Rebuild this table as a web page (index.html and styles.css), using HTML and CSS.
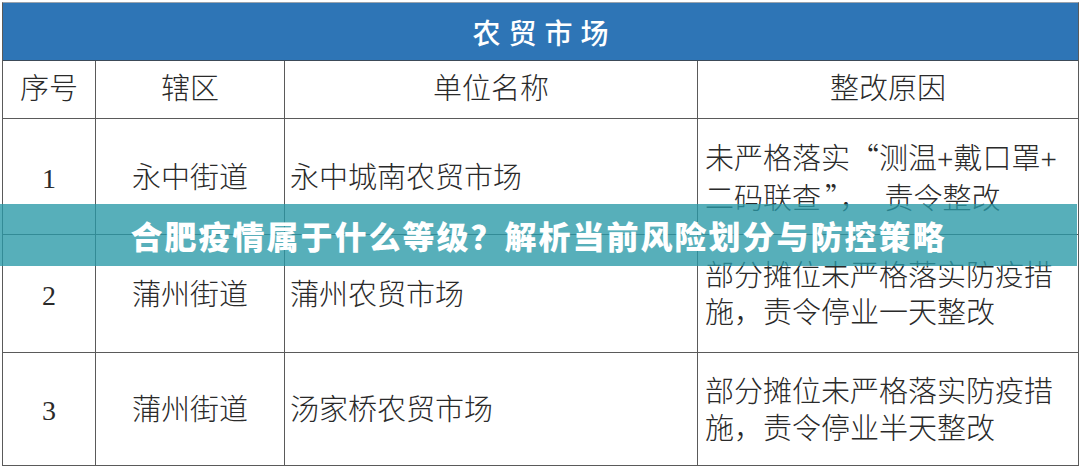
FILE: index.html
```html
<!DOCTYPE html>
<html lang="zh-CN">
<head>
<meta charset="utf-8">
<title>农贸市场</title>
<link rel="stylesheet" href="styles.css">
</head>
<body>
<div class="page">
  <div class="sheet">
    <div class="title">农贸市场</div>
    <div class="row head">
      <div class="cell c1">序号</div>
      <div class="cell c2">辖区</div>
      <div class="cell c3 center">单位名称</div>
      <div class="cell c4 center">整改原因</div>
    </div>
    <div class="row r1">
      <div class="cell c1 num">1</div>
      <div class="cell c2">永中街道</div>
      <div class="cell c3">永中城南农贸市场</div>
      <div class="cell c4"><span>未严格落实<span class="cjk">“</span>测温+戴口罩+<br>二码联查<span class="cjk q2">”</span>，<span class="gap"></span>责令整改</span></div>
    </div>
    <div class="row r2">
      <div class="cell c1 num">2</div>
      <div class="cell c2">蒲州街道</div>
      <div class="cell c3">蒲州农贸市场</div>
      <div class="cell c4"><span>部分摊位未严格落实防疫措<br>施，责令停业一天整改</span></div>
    </div>
    <div class="row r3">
      <div class="cell c1 num">3</div>
      <div class="cell c2">蒲州街道</div>
      <div class="cell c3">汤家桥农贸市场</div>
      <div class="cell c4"><span>部分摊位未严格落实防疫措<br>施，责令停业半天整改</span></div>
    </div>
  </div>
  <div class="banner">合肥疫情属于什么等级？解析当前风险划分与防控策略</div>
</div>
</body>
</html>
```

FILE: styles.css
```css
html, body {
  margin: 0;
  padding: 0;
  background: #ffffff;
}

.page {
  position: relative;
  width: 1080px;
  height: 470px;
  overflow: hidden;
  padding: 2px 0 0 2px;
  box-sizing: border-box;
}

.sheet {
  width: 1075px;
  border: 1px solid #5a5a5a;
  border-top-color: #9aa3ad;
  display: flex;
  flex-direction: column;
  font-family: "Liberation Serif", "Noto Sans CJK SC", serif;
  font-weight: 300;
  color: #2a2a2a;
  font-size: 29px;
}

.cjk {
  font-family: "Noto Sans CJK SC", sans-serif;
}

.q2 {
  padding-left: 4px;
}

.gap {
  display: inline-block;
  width: 16px;
}

.title {
  height: 57px;
  background: #2e75b6;
  color: #ffffff;
  display: flex;
  align-items: center;
  justify-content: center;
  font-family: "Noto Sans CJK SC", sans-serif;
  font-weight: 500;
  font-size: 28px;
  letter-spacing: 8px;
  padding-left: 8px;
  border-bottom: 1px solid #3c4a58;
}

.row {
  display: grid;
  grid-template-columns: 93px 189px 413px 1fr;
  border-bottom: 1px solid #5a5a5a;
}

.row.head { height: 57px; }
.row.r1 { height: 115px; }
.row.r2 { height: 117px; }
.row.r3 { height: 112px; border-bottom: none; }

.cell {
  display: flex;
  align-items: center;
  justify-content: center;
  border-right: 1px solid #5a5a5a;
  line-height: 37px;
  white-space: nowrap;
  padding-top: 3px;
  box-sizing: border-box;
}

.row.head .cell { padding-top: 0; }

.cell.c4 { border-right: none; }

.cell.c3 {
  justify-content: flex-start;
  padding-left: 5px;
}

.cell.c4 {
  justify-content: flex-start;
  padding-left: 7px;
}

.cell.center {
  justify-content: center;
  padding-left: 0;
}

.cell.num {
  font-family: "Liberation Serif", serif;
  font-weight: 400;
  font-size: 28px;
}

.banner {
  position: absolute;
  left: 0;
  top: 204px;
  width: 1077px;
  height: 62px;
  background: rgba(40, 152, 166, 0.78);
  color: #ffffff;
  display: flex;
  align-items: center;
  justify-content: center;
  font-family: "Noto Sans CJK SC", sans-serif;
  font-weight: 900;
  font-size: 32px;
  letter-spacing: 2px;
  white-space: nowrap;
}
```
